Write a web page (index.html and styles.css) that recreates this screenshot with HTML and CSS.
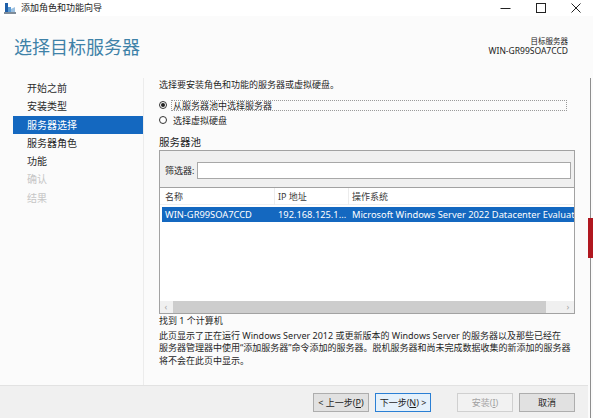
FILE: index.html
```html
<!DOCTYPE html>
<html lang="zh-CN">
<head>
<meta charset="utf-8">
<title>添加角色和功能向导</title>
<link rel="stylesheet" href="styles.css">
</head>
<body>
<div class="titlebar">
  <svg class="app-icon" width="12" height="11" viewBox="0 0 12 11">
    <rect x="1" y="0" width="3" height="9" fill="#1f5fa8"/>
    <rect x="4" y="4" width="3" height="5" fill="#5b9bd5"/>
    <path d="M7 6L11 4V9H7z" fill="#9bc0e0"/>
    <rect x="0" y="9" width="12" height="2" fill="#7f8c99"/>
  </svg>
  <span class="title">添加角色和功能向导</span>
  <span class="ctl"><svg width="11" height="11" viewBox="0 0 11 11"><path d="M0.5 5.5H10.5" stroke="#222" stroke-width="1"/></svg></span>
  <span class="ctl"><svg width="10" height="10" viewBox="0 0 10 10"><rect x="0.5" y="0.5" width="9" height="9" fill="none" stroke="#222" stroke-width="1"/></svg></span>
  <span class="ctl ctl-close"><svg width="10" height="10" viewBox="0 0 10 10"><path d="M0.5 0.5L9.5 9.5M9.5 0.5L0.5 9.5" stroke="#222" stroke-width="1"/></svg></span>
</div>

<div class="header">
  <h1 class="page-title">选择目标服务器</h1>
  <div class="meta">
    <div class="meta-label">目标服务器</div>
    <div class="meta-value">WIN-GR99SOA7CCD</div>
  </div>
</div>

<div class="body-row">
  <div class="window">
    <div class="main">
      <div class="nav">
        <div class="nav-item">开始之前</div>
        <div class="nav-item">安装类型</div>
        <div class="nav-item active">服务器选择</div>
        <div class="nav-item">服务器角色</div>
        <div class="nav-item">功能</div>
        <div class="nav-item disabled">确认</div>
        <div class="nav-item disabled">结果</div>
      </div>
      <div class="content">
        <p class="intro">选择要安装角色和功能的服务器或虚拟硬盘。</p>
        <div class="radios">
          <div class="radio-row"><span class="radio checked"></span><span class="radio-label focus">从服务器池中选择服务器</span></div>
          <div class="radio-row"><span class="radio"></span><span class="radio-label">选择虚拟硬盘</span></div>
        </div>
        <h2 class="section">服务器池</h2>
        <div class="pool">
          <div class="filter">
            <span class="filter-label">筛选器:</span>
            <div class="filter-input"></div>
          </div>
          <div class="cols">
            <span class="cell c-name">名称</span>
            <span class="cell c-ip">IP 地址</span>
            <span class="cell c-os">操作系统</span>
          </div>
          <div class="rows">
            <div class="row selected">
              <span class="cell c-name">WIN-GR99SOA7CCD</span>
              <span class="cell c-ip">192.168.125.1...</span>
              <span class="cell c-os">Microsoft Windows Server 2022 Datacenter Evaluation</span>
            </div>
          </div>
          <div class="hscroll">
            <span class="arrow">&lsaquo;</span>
            <span class="thumb"></span>
            <span class="track"></span>
            <span class="arrow">&rsaquo;</span>
          </div>
        </div>
        <p class="found">找到 1 个计算机</p>
        <p class="desc">此页显示了正在运行 Windows Server 2012 或更新版本的 Windows Server 的服务器以及那些已经在<br>服务器管理器中使用“添加服务器”命令添加的服务器。脱机服务器和尚未完成数据收集的新添加的服务器<br>将不会在此页中显示。</p>
      </div>
    </div>
    <div class="footer">
      <button class="btn">&lt; 上一步(<u>P</u>)</button>
      <button class="btn btn-default">下一步(<u>N</u>) &gt;</button>
      <button class="btn btn-disabled btn-gap">安装(<u>I</u>)</button>
      <button class="btn">取消</button>
    </div>
  </div>
  <div class="edge">
    <div class="edge-line edge-top"></div>
    <div class="edge-red"></div>
    <div class="edge-line edge-bottom"></div>
  </div>
</div>
</body>
</html>
```

FILE: styles.css
```css
* { box-sizing: border-box; margin: 0; padding: 0; }
html, body { width: 593px; height: 418px; overflow: hidden; }
body {
  background: #fbfbfb;
  font-family: "Noto Sans", "Noto Sans CJK SC", sans-serif;
  color: #1f1f1f;
  font-size: 9px;
  display: flex;
  flex-direction: column;
}

/* title bar */
.titlebar { height: 16px; display: flex; align-items: center; background: #fff; }
.app-icon { margin-left: 4px; margin-right: 5px; flex: none; }
.title { flex: 1; font-size: 9px; line-height: 12px; color: #222; }
.ctl { width: 35px; height: 16px; display: flex; align-items: center; justify-content: center; }

/* header */
.header { height: 62px; display: flex; justify-content: space-between; padding: 0 25px 0 14px; background: #fbfbfb; }
.page-title { font-size: 18px; line-height: 22px; font-weight: 400; color: #3f82a8; padding-top: 20px; }
.meta { padding-top: 21px; text-align: right; color: #222; }
.meta-label { font-size: 7.5px; line-height: 9px; }
.meta-value { font-size: 8.5px; line-height: 10px; }

/* body */
.body-row { flex: 1; display: flex; min-width: 0; }
.window { flex: 1; display: flex; flex-direction: column; min-width: 0; overflow: hidden; }
.main { height: 307px; display: flex; min-width: 0; }

.nav { width: 144px; flex: none; padding: 1px 0 0 13px; border-right: 1px solid #ececec; }
.nav-item { height: 18.3px; line-height: 18.3px; padding-left: 14px; font-size: 10px; color: #2a2a2a; }
.nav-item.active { background: #1468c0; color: #fff; }
.nav-item.disabled { color: #c6c6c6; }

.content { flex: 1; padding: 0 13px 0 15px; display: flex; flex-direction: column; min-width: 0; }
.intro { line-height: 14px; }
.radios { margin-top: 5.5px; }
.radio-row { height: 15px; display: flex; align-items: center; }
.radio { width: 8px; height: 8px; border: 1px solid #333; border-radius: 50%; background: #fff; flex: none; display: flex; align-items: center; justify-content: center; }
.radio.checked::after { content: ""; width: 4px; height: 4px; border-radius: 50%; background: #222; }
.radio-label { margin-left: 4px; padding-left: 1px; height: 11px; line-height: 9px; border: 1px solid transparent; }
.radio-label.focus { flex: 1; margin-right: 8px; border: 1px dotted #9a9a9a; }

.section { font-size: 10.5px; font-weight: 400; line-height: 14px; margin-top: 7.5px; color: #222; }

.pool { margin-top: 1px; height: 164px; border: 1px solid #a2a2a2; display: flex; flex-direction: column; background: #fff; min-width: 0; }
.filter { height: 37px; flex: none; background: #f0f0f0; border-bottom: 1px solid #a2a2a2; display: flex; align-items: flex-start; padding: 11px 3px 0 5px; }
.filter-label { width: 32px; line-height: 17px; flex: none; }
.filter-input { flex: 1; height: 17px; border: 1px solid #a8a8a8; background: #fff; }

.cols { height: 17px; flex: none; display: flex; align-items: center; padding-left: 2px; color: #3a3a3a; border-bottom: 1px solid #f0f0f0; }
.cols .cell { border-right: 1px solid #ececec; height: 17px; line-height: 17px; }
.cols .c-os { border-right: none; }
.cell { padding-left: 3px; white-space: nowrap; overflow: hidden; flex: none; }
.c-name { width: 113px; }
.c-ip { width: 74px; }
.c-os { flex: 1; min-width: 0; }

.rows { flex: 1; padding: 2px 0 0 2px; min-width: 0; }
.row { height: 15px; display: flex; align-items: center; line-height: 15px; font-size: 9.3px; }
.row.selected { background: #1468c0; color: #fff; }

.hscroll { height: 12px; flex: none; background: #f0f0f0; display: flex; align-items: center; }
.arrow { width: 12px; text-align: center; color: #a6a6a6; font-size: 9px; line-height: 12px; flex: none; }
.thumb { width: 373px; height: 12px; margin-left: 1px; background: #cdcdcd; flex: none; }
.track { flex: 1; }

.found { line-height: 13px; margin-top: 0; }
.desc { line-height: 12.5px; margin-top: 2.5px; white-space: nowrap; }

/* footer */
.footer { height: 33px; flex: none; background: #f0f0f0; border-top: 1px solid #e2e2e2; display: flex; justify-content: flex-end; align-items: flex-start; padding: 7px 13px 0 0; gap: 6px; }
.btn { width: 56px; height: 19px; border: 1px solid #adadad; background: #e1e1e1; font-family: inherit; font-size: 9px; color: #1f1f1f; line-height: 17px; }
.btn u { text-decoration: underline; }
.btn-default { border-color: #2a7fd4; background: #e5f1fb; }
.btn-disabled { border-color: #d0d0d0; background: #f2f2f2; color: #a2a2a2; }
.btn-gap { margin-left: 20px; }

/* edge of neighbouring window */
.edge { width: 5px; flex: none; display: flex; flex-direction: column; }
.edge-line { margin-left: 2px; border-left: 1px solid #8e8e8e; }
.edge-top { height: 140px; }
.edge-red { height: 40px; background: #b0171f; }
.edge-bottom { flex: 1; }
```
